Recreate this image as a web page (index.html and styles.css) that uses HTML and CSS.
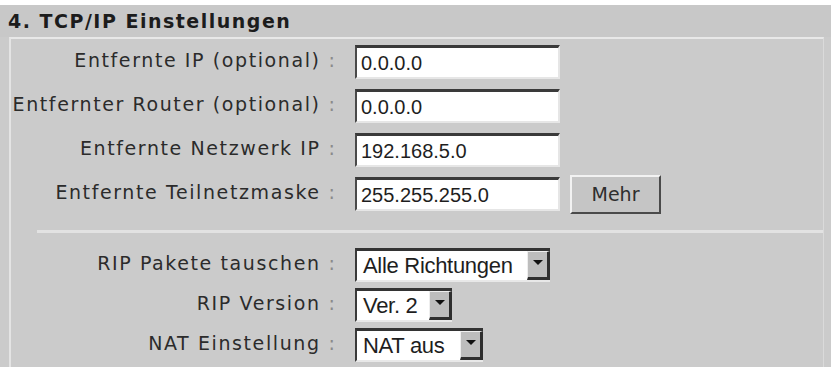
FILE: index.html
```html
<!DOCTYPE html>
<html lang="de">
<head>
  <meta charset="UTF-8">
  <meta name="viewport" content="width=device-width, initial-scale=1.0">
  <title>TCP/IP Einstellungen</title>
  <link rel="stylesheet" href="styles.css">
</head>
<body>
  <div class="page">
    <div class="section-title">4. TCP/IP Einstellungen</div>
    <div class="panel">
      <div class="fields">
        <div class="row">
          <label class="label">Entfernte IP (optional)<span class="colon">:</span></label>
          <input class="text-input" type="text" value="0.0.0.0">
        </div>
        <div class="row">
          <label class="label">Entfernter Router (optional)<span class="colon">:</span></label>
          <input class="text-input" type="text" value="0.0.0.0">
        </div>
        <div class="row">
          <label class="label">Entfernte Netzwerk IP<span class="colon">:</span></label>
          <input class="text-input" type="text" value="192.168.5.0">
        </div>
        <div class="row">
          <label class="label">Entfernte Teilnetzmaske<span class="colon">:</span></label>
          <input class="text-input" type="text" value="255.255.255.0">
          <button class="button">Mehr</button>
        </div>
      </div>

      <div class="fields sub">
        <div class="row">
          <label class="label">RIP Pakete tauschen<span class="colon">:</span></label>
          <div class="dropdown dir">
            <span class="dropdown-value">Alle Richtungen</span>
            <span class="dropdown-arrow"></span>
          </div>
        </div>
        <div class="row">
          <label class="label">RIP Version<span class="colon">:</span></label>
          <div class="dropdown ver">
            <span class="dropdown-value">Ver. 2</span>
            <span class="dropdown-arrow"></span>
          </div>
        </div>
        <div class="row">
          <label class="label">NAT Einstellung<span class="colon">:</span></label>
          <div class="dropdown nat">
            <span class="dropdown-value">NAT aus</span>
            <span class="dropdown-arrow"></span>
          </div>
        </div>
      </div>
    </div>
  </div>
</body>
</html>
```

FILE: styles.css
```css
body {
  margin: 0;
  background-color: #ffffff;
  font-family: "DejaVu Sans", Verdana, sans-serif;
}

.page {
  margin-top: 5px;
  height: 362px;
  background-color: #cbcbcb;
  overflow: hidden;
}

.section-title {
  height: 32px;
  display: flex;
  align-items: center;
  padding-left: 8px;
  background-color: #c8c8c8;
  font-size: 19px;
  font-weight: bold;
  letter-spacing: 1.5px;
  color: #1c1c1c;
}

.panel {
  margin: 0 7px 0 9px;
  height: 100%;
  padding-top: 6px;
  border-top: 2px solid #e8e8e8;
  border-left: 2px solid #e4e4e4;
  border-right: 1px solid #dadada;
}

.fields {
  display: flex;
  flex-direction: column;
  gap: 10px;
}

.row {
  height: 34px;
  display: flex;
  align-items: center;
}

.label {
  width: 324px;
  margin-right: 20px;
  margin-bottom: 4px;
  text-align: right;
  font-size: 19px;
  letter-spacing: 1.6px;
  color: #2b2b2b;
  white-space: nowrap;
}

.colon {
  padding-left: 8px;
  letter-spacing: 0;
  color: #8a8a8a;
}

.text-input {
  box-sizing: border-box;
  width: 205px;
  height: 34px;
  padding: 2px 4px 0;
  border: 3px solid;
  border-color: #3a3a3a #e6e6e6 #e6e6e6 #4a4a4a;
  border-width: 3px 2px 2px 2px;
  background-color: #ffffff;
  font-family: "Liberation Sans", Arial, sans-serif;
  font-size: 20px;
  color: #1e1e1e;
  outline: none;
}

.button {
  box-sizing: border-box;
  width: 91px;
  height: 39px;
  margin-left: 10px;
  border: 2px solid;
  border-color: #f2f2f2 #4a4a4a #4a4a4a #f2f2f2;
  background-color: #c5c5c5;
  font-family: "DejaVu Sans", Verdana, sans-serif;
  font-size: 19px;
  color: #2e2e2e;
}

.sub {
  margin-top: 19px;
  margin-left: 26px;
  padding-top: 15px;
  border-top: 3px solid #e2e2e2;
  gap: 6px;
}

.sub .label {
  width: 298px;
}

.dropdown {
  box-sizing: border-box;
  height: 34px;
  display: flex;
  align-items: center;
  justify-content: space-between;
  padding-left: 6px;
  border-style: solid;
  border-width: 3px 0 2px 2px;
  border-color: #333333 #333333 #e8e8e8 #3a3a3a;
  background-color: #ffffff;
  font-family: "Liberation Sans", Arial, sans-serif;
  font-size: 22px;
  letter-spacing: -0.3px;
  color: #1e1e1e;
  white-space: nowrap;
}

.dropdown.dir { width: 195px; }
.dropdown.ver { width: 97px; }
.dropdown.nat { width: 128px; }

.dropdown-arrow {
  box-sizing: border-box;
  width: 23px;
  height: 29px;
  display: flex;
  align-items: center;
  justify-content: center;
  background-color: #bdbdbd;
  border-style: solid;
  border-width: 1px 3px 3px 1px;
  border-color: #eeeeee #2e2e2e #2e2e2e #eeeeee;
}

.dropdown-arrow::after {
  content: "";
  margin-bottom: 4px;
  border-left: 5px solid transparent;
  border-right: 5px solid transparent;
  border-top: 5px solid #111111;
}
```
